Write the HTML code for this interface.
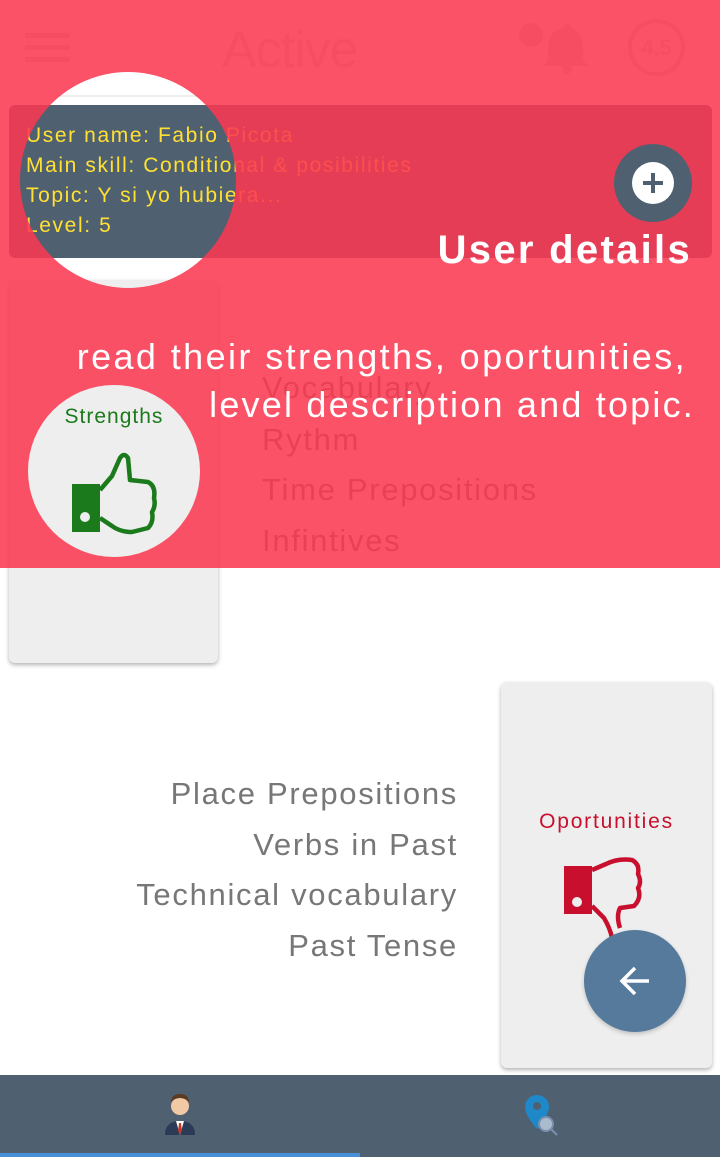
<!DOCTYPE html>
<html><head><meta charset="utf-8"><style>
*{margin:0;padding:0;box-sizing:border-box}
body{width:720px;height:1157px;position:relative;overflow:hidden;background:#fff;font-family:"Liberation Sans",sans-serif}
.a{position:absolute}
.card{background:#eee;border-radius:6px;box-shadow:0 2px 4px rgba(0,0,0,.3)}
.li{position:absolute;font-size:31px;color:#777;white-space:nowrap;letter-spacing:1.7px}
.y{position:absolute;left:26px;font-size:21px;color:#ffe033;white-space:nowrap;letter-spacing:1.6px}
</style></head><body>
<!-- header -->
<div class="a" style="left:25px;top:33px;width:45px;height:5px;background:#d8d8d8"></div>
<div class="a" style="left:25px;top:45px;width:45px;height:5px;background:#d8d8d8"></div>
<div class="a" style="left:25px;top:57px;width:45px;height:5px;background:#d8d8d8"></div>
<div class="a" style="left:222px;top:20px;font-size:52px;font-weight:100;color:#d8d8d8;letter-spacing:-1px;transform:scaleY(1.0)">Active</div>
<svg class="a" style="left:515px;top:20px" width="75" height="55"><circle cx="16" cy="15" r="12" fill="#d8d8d8"/><path d="M48 8a4 4 0 0 1 8 0c10 3 12 12 12 22v10l5 6H28l5-6V30c0-10 2-19 15-22z" fill="#d8d8d8"/><circle cx="52" cy="49" r="5" fill="#d8d8d8"/></svg>
<div class="a" style="left:628px;top:19px;width:57px;height:57px;border:4px solid #d8d8d8;border-radius:50%;text-align:center;line-height:49px;font-size:22px;font-weight:bold;color:#d8d8d8">4.5</div>
<div class="a" style="left:0;top:95px;width:720px;height:2px;background:#eee"></div>
<!-- user card -->
<div class="a" style="left:9px;top:105px;width:703px;height:153px;background:#4f6170;border-radius:6px"></div>
<div class="y" style="top:124px">User name: Fabio Picota</div>
<div class="y" style="top:154px">Main skill: Conditional &amp; posibilities</div>
<div class="y" style="top:184px">Topic: Y si yo hubiera...</div>
<div class="y" style="top:214px">Level: 5</div>
<div class="a" style="left:614px;top:144px;width:78px;height:78px;border-radius:50%;background:#4f6170"></div>
<div class="a" style="left:632px;top:162px;width:42px;height:42px;border-radius:50%;background:#fff"></div>
<div class="a" style="left:643px;top:181px;width:20px;height:4px;background:#4f6170"></div>
<div class="a" style="left:651px;top:173px;width:4px;height:20px;background:#4f6170"></div>
<!-- strengths card -->
<div class="a card" style="left:9px;top:280px;width:209px;height:383px"></div>
<div class="a" style="left:0;top:405px;width:228px;text-align:center;font-size:21px;color:#1b7a1b;letter-spacing:1px">Strengths</div>
<svg class="a" style="left:70px;top:450px" width="90" height="90" viewBox="0 0 90 90"><rect x="2" y="34" width="28" height="48" fill="#1b7a1b"/><circle cx="15" cy="67" r="5" fill="#eee"/><path d="M30 40 L42 26 L50 8 Q54 2 58 8 L60 30 L78 32 Q86 36 84 48 Q86 56 82 62 Q84 72 78 78 L62 82 Q50 82 42 76 L30 68" fill="none" stroke="#1b7a1b" stroke-width="4.5" stroke-linejoin="round"/></svg>
<div class="li" style="left:262px;top:370px">Vocabulary</div>
<div class="li" style="left:262px;top:422px">Rythm</div>
<div class="li" style="left:262px;top:472px">Time Prepositions</div>
<div class="li" style="left:262px;top:523px">Infintives</div>
<!-- second section -->
<div class="li" style="right:262px;top:776px">Place Prepositions</div>
<div class="li" style="right:262px;top:827px">Verbs in Past</div>
<div class="li" style="right:262px;top:877px">Technical vocabulary</div>
<div class="li" style="right:262px;top:928px">Past Tense</div>
<div class="a card" style="left:501px;top:682px;width:211px;height:386px"></div>
<div class="a" style="left:501px;top:810px;width:211px;text-align:center;font-size:21px;color:#c8102e;letter-spacing:1.8px">Oportunities</div>
<svg class="a" style="left:562px;top:854px" width="90" height="90" viewBox="0 0 90 90"><rect x="2" y="12" width="28" height="48" fill="#c8102e"/><circle cx="15" cy="48" r="5" fill="#eee"/><path d="M30 16 L44 10 Q56 4 70 6 Q78 10 76 20 Q80 28 76 34 Q80 44 72 52 L58 54 Q54 62 58 74 M30 52 L42 64 Q48 74 50 84" fill="none" stroke="#c8102e" stroke-width="4.5" stroke-linejoin="round"/></svg>
<div class="a" style="left:584px;top:930px;width:102px;height:102px;border-radius:50%;background:#557a9c;box-shadow:0 2px 4px rgba(0,0,0,.2)"></div>
<svg class="a" style="left:615px;top:961px" width="40" height="40"><path d="M34 20H8M20 7L7 20l13 13" fill="none" stroke="#fff" stroke-width="3.5"/></svg>
<!-- bottom nav -->
<div class="a" style="left:0;top:1075px;width:720px;height:82px;background:#4f6170"></div>
<div class="a" style="left:0;top:1153px;width:360px;height:4px;background:#4a90d9"></div>
<svg class="a" style="left:162px;top:1093px" width="36" height="44"><circle cx="18" cy="13" r="9" fill="#f1c9a5"/><path d="M9 10q0-9 9-9t9 9q-3-5-9-5t-9 5z" fill="#5a3a22"/><path d="M3 42q0-14 15-14t15 14z" fill="#2b3a55"/><path d="M14 28h8l-4 14z" fill="#fff"/><path d="M17 30h2l1 8-2 3-2-3z" fill="#c0392b"/></svg>
<svg class="a" style="left:520px;top:1093px" width="40" height="44"><path d="M5 14a12 12 0 0 1 24 0c0 9-12 22-12 22S5 23 5 14z" fill="#1e88c8"/><circle cx="17" cy="13" r="4" fill="#4f6170"/><circle cx="26" cy="31" r="7" fill="#a9bccc" stroke="#7a8fb0" stroke-width="2"/><path d="M31 36l6 6" stroke="#7a8fb0" stroke-width="2"/></svg>
<!-- overlay -->
<svg class="a" style="left:0;top:0" width="720" height="568"><path fill-rule="evenodd" fill="rgba(252,56,82,0.87)" d="M0 0H720V568H0Z M20 180a108 108 0 1 0 216 0a108 108 0 1 0 -216 0Z M28 471a86 86 0 1 0 172 0a86 86 0 1 0 -172 0Z M614 183a39 39 0 1 0 78 0a39 39 0 1 0 -78 0Z"/></svg>
<div class="a" style="right:28px;top:228px;font-size:40px;font-weight:bold;color:#fff;letter-spacing:2.3px">User details</div>
<div class="a" style="right:33px;top:336px;font-size:36px;color:#fff;text-align:right;white-space:nowrap;letter-spacing:2.4px">read their strengths, oportunities,</div>
<div class="a" style="right:25px;top:384px;font-size:36px;color:#fff;text-align:right;white-space:nowrap;letter-spacing:2.2px">level description and topic.</div>
</body></html>
